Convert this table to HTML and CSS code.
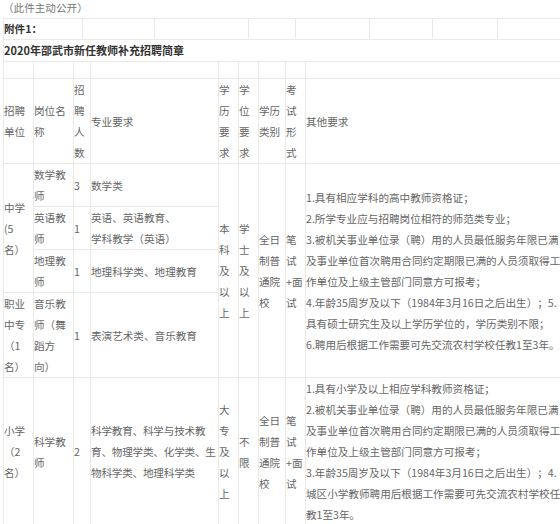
FILE: index.html
```html
<!DOCTYPE html>
<html lang="zh-CN">
<head>
<meta charset="utf-8">
<title>2020年邵武市新任教师补充招聘简章</title>
<link rel="stylesheet" href="styles.css">
</head>
<body>
<div class="page">
  <p class="note">（此件主动公开）</p>
  <table class="t1">
    <colgroup>
      <col class="w79"><col class="w72"><col class="w94"><col class="w47"><col class="w74"><col class="w63"><col class="w65"><col class="w76">
    </colgroup>
    <tr class="r-att">
      <td class="strong">附件1：</td><td></td><td></td><td></td><td></td><td></td><td></td><td></td>
    </tr>
  </table>
  <table class="t2">
    <colgroup>
      <col class="c1"><col class="c2"><col class="c3"><col class="c4"><col class="c5"><col class="c6"><col class="c7"><col class="c8"><col class="c9">
    </colgroup>
    <tr class="r-title">
      <td colspan="9" class="strong title">2020年邵武市新任教师补充招聘简章</td>
    </tr>
    <tr class="r-empty">
      <td></td><td></td><td></td><td></td><td></td><td></td><td></td><td></td><td></td>
    </tr>
    <tr>
      <td>招聘单位</td>
      <td>岗位名称</td>
      <td>招聘人数</td>
      <td>专业要求</td>
      <td>学历要求</td>
      <td>学位要求</td>
      <td>学历类别</td>
      <td>考试形式</td>
      <td>其他要求</td>
    </tr>
    <tr>
      <td rowspan="3">中学(5名）</td>
      <td>数学教师</td>
      <td>3</td>
      <td>数学类</td>
      <td rowspan="4">本科及以上</td>
      <td rowspan="4">学士及以上</td>
      <td rowspan="4">全日制普通院校</td>
      <td rowspan="4">笔试+面试</td>
      <td rowspan="4" class="other">1.具有相应学科的高中教师资格证；<br>2.所学专业应与招聘岗位相符的师范类专业；<br>3.被机关事业单位录（聘）用的人员最低服务年限已满<br>及事业单位首次聘用合同约定期限已满的人员须取得工<br>作单位及上级主管部门同意方可报考；<br>4.年龄35周岁及以下（1984年3月16日之后出生）；5.<br>具有硕士研究生及以上学历学位的，学历类别不限；<br>6.聘用后根据工作需要可先交流农村学校任教1至3年。</td>
    </tr>
    <tr>
      <td>英语教师</td>
      <td>1</td>
      <td class="major">英语、英语教育、<br>学科教学（英语）</td>
    </tr>
    <tr>
      <td>地理教师</td>
      <td>1</td>
      <td>地理科学类、地理教育</td>
    </tr>
    <tr>
      <td>职业中专（1名）</td>
      <td>音乐教师（舞蹈方向）</td>
      <td>1</td>
      <td>表演艺术类、音乐教育</td>
    </tr>
    <tr>
      <td>小学（2名）</td>
      <td>科学教师</td>
      <td>2</td>
      <td class="major tight">科学教育、科学与技术教<br>育、物理学类、化学类、生<br>物科学类、地理科学类</td>
      <td>大专及以上</td>
      <td>不限</td>
      <td>全日制普通院校</td>
      <td>笔试+面试</td>
      <td class="other">1.具有小学及以上相应学科教师资格证；<br>2.被机关事业单位录（聘）用的人员最低服务年限已满<br>及事业单位首次聘用合同约定期限已满的人员须取得工<br>作单位及上级主管部门同意方可报考；<br>3.年龄35周岁及以下（1984年3月16日之后出生）；4.<br>城区小学教师聘用后根据工作需要可先交流农村学校任<br>教1至3年。</td>
    </tr>
  </table>
</div>
</body>
</html>
```

FILE: styles.css
```css
html, body {
  margin: 0;
  padding: 0;
  background: #ffffff;
  overflow: hidden;
}

body {
  font-family: "Noto Sans CJK SC", "Noto Sans", sans-serif;
  font-size: 10.6px;
  color: #666666;
  text-spacing-trim: space-all;
}

.page {
  padding-left: 3px;
  width: 600px;
}

.note {
  margin: 0;
  height: 18px;
  line-height: 16px;
  color: #777777;
}

table {
  border-collapse: collapse;
  table-layout: fixed;
  width: 570px;
}

td {
  border: 1px solid #e9e9e9;
  padding: 0;
  line-height: 21px;
  vertical-align: middle;
  text-align: left;
  word-break: normal;
}

.t2 tr:first-child td {
  border-top: 0;
}

.w79 { width: 79px; }
.w72 { width: 72px; }
.w94 { width: 94px; }
.w47 { width: 47px; }
.w74 { width: 74px; }
.w63 { width: 63px; }
.w65 { width: 65px; }
.w76 { width: 76px; }

.c1 { width: 30px; }
.c2 { width: 40px; }
.c3 { width: 17px; }
.c4 { width: 128px; }
.c5 { width: 20px; }
.c6 { width: 20px; }
.c7 { width: 27px; }
.c8 { width: 20px; }
.c9 { width: 268px; }

.r-att td {
  line-height: 20px;
}

.r-title td {
  line-height: 21px;
}

.r-empty td {
  height: 16px;
  line-height: 16px;
}

.strong {
  font-weight: bold;
  color: #333333;
}

.title {
  font-size: 11px;
}

.major,
.other {
  white-space: nowrap;
}

.tight {
  letter-spacing: -0.2px;
}
```
